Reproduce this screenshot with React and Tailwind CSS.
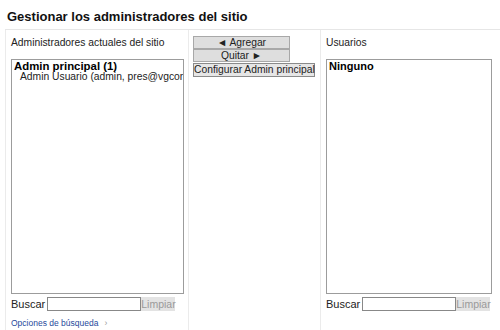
import React from "react";

function SearchRow() {
  return (
    <div className="flex items-center mt-[3px] h-[14px]">
      <span className="text-[11px] text-[#222] mr-[2px]">Buscar</span>
      <input
        type="text"
        className="w-[94px] h-[14px] border border-[#888] bg-white"
      />
      <button className="h-[14px] w-[34px] bg-[#e3e3e3] text-[#9a9a9a] text-[10.5px] leading-[14px] text-center">
        Limpiar
      </button>
    </div>
  );
}

export default function App() {
  return (
    <div
      className="w-[500px] h-[330px] bg-white overflow-hidden text-[#222]"
      style={{ fontFamily: '"Liberation Sans", Arial, sans-serif' }}
    >
      <h2 className="text-[13px] font-bold leading-[16px] pl-[7px] pt-[9px] h-[29px] text-[#111]">
        Gestionar los administradores del sitio
      </h2>

      <div className="flex ml-[5px] border-t border-[#e6e6e6] h-[301px]">
        {/* actuales */}
        <div className="w-[183px] border-l border-[#ebebeb] pl-[5px] pr-[4px] pt-[6px] flex flex-col">
          <div className="text-[10.3px] leading-[13px] h-[23px]">
            Administradores actuales del sitio
          </div>
          <div className="h-[235px] border border-[#9c9c9c] px-[2px] overflow-hidden whitespace-nowrap leading-[10px]">
            <div className="font-bold text-black pt-[1px] text-[11.4px]">Admin principal (1)</div>
            <div className="pl-[6px] pt-[1px] text-[#222] text-[10.3px]">
              Admin Usuario (admin, pres@vgcor
            </div>
          </div>
          <SearchRow />
          <div className="mt-[6px] text-[8.5px] text-[#1f4a9c] flex items-center gap-[6px]">
            <span>Opciones de búsqueda</span>
            <span className="text-[#9a9a9a]">›</span>
          </div>
        </div>

        {/* botones */}
        <div className="w-[132px] border-l border-[#ebebeb] pl-[4px] pt-[6px] flex flex-col items-start">
          <button className="w-[97px] h-[13px] border border-[#a8a8a8] bg-[#dedede] text-[10.3px] leading-[11px] text-[#222]">
            ◄ Agregar
          </button>
          <button className="w-[97px] h-[13px] mb-[1px] border border-[#a8a8a8] bg-[#dedede] text-[10.3px] leading-[11px] text-[#222]">
            Quitar ►
          </button>
          <button className="w-[122px] h-[14px] border border-[#8a8a8a] bg-[#e6e6e6] text-[10.3px] leading-[12px] text-[#222] whitespace-nowrap">
            Configurar Admin principal
          </button>
        </div>

        {/* usuarios */}
        <div className="flex-1 border-l border-[#ebebeb] pl-[5px] pt-[6px] flex flex-col">
          <div className="text-[10.3px] leading-[13px] h-[23px]">Usuarios</div>
          <div className="w-[166px] h-[235px] border border-[#9c9c9c] px-[2px] leading-[10px]">
            <div className="font-bold text-black pt-[1px] text-[11px]">Ninguno</div>
          </div>
          <SearchRow />
        </div>
      </div>
    </div>
  );
}
